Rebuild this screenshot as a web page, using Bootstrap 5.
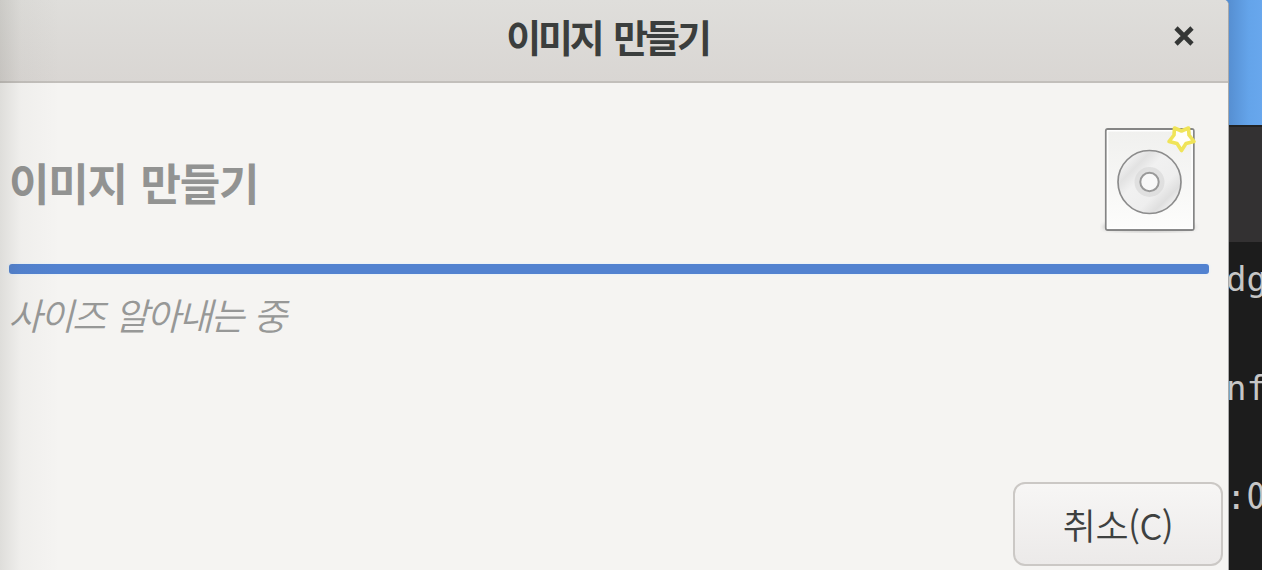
<!DOCTYPE html>
<html lang="ko">
<head>
<meta charset="utf-8">
<title>이미지 만들기</title>
<link href="https://cdn.jsdelivr.net/npm/bootstrap@5.3.0/dist/css/bootstrap.min.css" rel="stylesheet">
<style>
body{background:#1c1c1c;font-family:"Noto Sans CJK KR",sans-serif;color:#3b3e3d}
.screen{width:1262px;height:570px;background:linear-gradient(#568fd2 125px,#1c1c1c 125px)}
.dialog-win{width:1229px;background:#f5f4f2;border-right:1px solid #aaa;border-top-right-radius:5px}
.shade{width:60px;background:linear-gradient(90deg,rgba(70,70,60,.13),rgba(70,70,60,.03) 35%,transparent);pointer-events:none}
.titlebar{height:83px;background:linear-gradient(#dfdedb,#d9d6d3);border-bottom:2px solid #c2bfbb}
.title-text{font-size:38px;line-height:56px;font-weight:700;padding:8px 13px 0 0;letter-spacing:-3.1px;word-spacing:4px}
.close-btn{width:24px;height:24px;right:32px;top:24px}
.hero{height:181px;padding:0 10px 0 9px}
.heading{font-size:44px;line-height:60px;font-weight:700;color:#929392;padding-top:21px;letter-spacing:-1.2px;word-spacing:2.5px}
.disc{width:100px;height:116px;margin:40px 18px 0 0}
.meter{height:10px;margin:0 19px 0 9px;background:#5282d0;border-radius:3px;box-shadow:0 0 3px #def}
.status{font-size:37px;line-height:54px;font-weight:350;font-style:italic;color:#979897;padding:13px 0 0 8px;letter-spacing:-2px;word-spacing:2px}
.cancel-btn{width:210px;height:84px;border:2px solid #cbc8c5;border-radius:12px;background:linear-gradient(#f7f6f5,#eceae9);font-size:36px;font-weight:350;color:#3e4140;margin:0 5px 4px 0;letter-spacing:-.5px}
.backdrop{width:33px;background:#1c1c1c}
.wallpaper{height:125px;background:linear-gradient(90deg,#568fd2,#64a4ea 60%,#68a7ed)}
.term-head{height:117px;background:#333132;border-top:2px solid #222}
.term{font-family:"DejaVu Sans Mono",monospace;font-size:34px;line-height:109px;color:#c6c6c6;margin-top:-17px}
.term div{margin-left:-3px;height:109px;white-space:pre}
.zero{font-family:"Noto Sans Mono CJK KR",monospace;font-size:38px;line-height:1}
</style>
</head>
<body class="overflow-hidden">
<div class="screen d-flex position-relative">
  <main class="dialog-win d-flex flex-column position-relative flex-shrink-0 overflow-hidden">
    <header class="titlebar position-relative d-flex justify-content-center flex-shrink-0">
      <div class="title-text text-nowrap">이미지 만들기</div>
      <svg class="close-btn position-absolute" viewBox="0 0 24 24" role="img" aria-label="닫기"><path d="M4 4L20 20M20 4L4 20" stroke="#343635" stroke-width="4.6"/></svg>
    </header>
    <section class="hero d-flex justify-content-between align-items-start flex-shrink-0">
      <div class="heading text-nowrap mt-5">이미지 만들기</div>
      <svg class="disc" viewBox="1100 123 100 116">
        <defs>
          <linearGradient id="paper" x1="0" y1="0" x2="0" y2="1"><stop stop-color="#f0f0ee"/><stop offset="1" stop-color="#fdfdfc"/></linearGradient>
          <linearGradient id="shine" x1="0" y1="0" x2="1" y2="1"><stop offset=".08" stop-color="#fafafa"/><stop offset=".27" stop-color="#e2e2e2"/><stop offset=".4" stop-color="#f1f1f1"/><stop offset=".64" stop-color="#eee"/><stop offset=".77" stop-color="#dfdfdf"/><stop offset=".9" stop-color="#f8f8f8"/></linearGradient>
          <filter id="soft"><feGaussianBlur stdDeviation="2.2"/></filter>
        </defs>
        <ellipse cx="1149" cy="227" rx="47" ry="5" fill="#aaa" opacity=".65" filter="url(#soft)"/>
        <rect x="1105.8" y="129" width="88" height="101" rx="2" fill="url(#paper)" stroke="#858585" stroke-width="1.8"/>
        <rect x="1107.6" y="130.8" width="84.5" height="97.5" fill="none" stroke="#fff" stroke-width="1.5"/>
        <circle cx="1149.5" cy="182" r="31.5" fill="url(#shine)" stroke="#8c8c8c" stroke-width="1.7"/>
        <circle cx="1149.5" cy="182" r="15" fill="#d5d5d5" opacity=".6"/>
        <circle cx="1149.5" cy="182" r="9.2" fill="#f8f8f8" stroke="#999" stroke-width="2"/>
        <path d="M1174.500 128L1181.500 131L1188.500 128L1189 135L1194 141.500L1186 143.500L1181.500 150.500L1177 143.500L1169 141.500L1174 135Z" fill="#fffef8" stroke="#f0e458" stroke-width="3.6" stroke-linejoin="round"/>
      </svg>
    </section>
    <div class="meter flex-shrink-0" role="progressbar" aria-label="진행률"></div>
    <div class="status text-nowrap">사이즈 알아내는 중</div>
    <button class="btn cancel-btn p-0 mt-auto align-self-end flex-shrink-0" type="button">취소(C)</button>
    <div class="shade position-absolute top-0 bottom-0 start-0"></div>
  </main>
  <aside class="backdrop overflow-hidden flex-shrink-0">
    <div class="wallpaper"></div>
    <div class="term-head"></div>
    <div class="term"><div>dg</div><div>nf</div><div>:<span class="zero">0</span></div></div>
  </aside>
</div>
</body>
</html>
